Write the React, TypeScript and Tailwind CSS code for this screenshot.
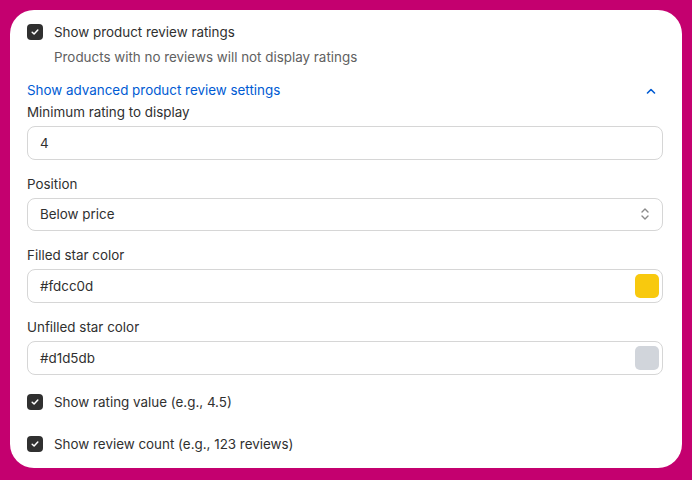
import React from "react";

function Check() {
  return (
    <span className="flex h-4 w-4 shrink-0 items-center justify-center rounded-[4px] bg-[#303030]">
      <svg width="10" height="10" viewBox="0 0 10 10" fill="none">
        <path d="M2.2 5.2 L4.1 7 L7.8 3.1" stroke="white" strokeWidth="1.5" strokeLinecap="round" strokeLinejoin="round" />
      </svg>
    </span>
  );
}

function Field({ label, children }: { label: string; children: React.ReactNode }) {
  return (
    <div className="flex flex-col">
      <div className="h-5 leading-5">{label}</div>
      <div className="mt-1 flex h-[33.67px] items-center rounded-[8px] border border-[#d6d6d6] bg-white pl-3 pr-[3px]">
        {children}
      </div>
    </div>
  );
}

export default function App() {
  return (
    <div className="h-[480px] w-[692px] bg-[#c4006f] pl-[10px] pt-[10px]" style={{ fontFamily: "Inter, 'Noto Sans', sans-serif" }}>
      <div className="flex h-[458px] w-[672px] flex-col rounded-[24px] bg-white pl-[17px] pr-[19px] pt-3 text-[13.4px] text-[#303030]">
        <div className="flex h-5 items-center gap-[11px]">
          <Check />
          <span>Show product review ratings</span>
        </div>
        <div className="mt-[5px] h-5 pl-[27px] leading-5 text-[#616161]">Products with no reviews will not display ratings</div>
        <div className="mt-[13.5px] flex h-5 items-center justify-between text-[#005bd3]">
          <span>Show advanced product review settings</span>
          <svg width="10" height="6" viewBox="0 0 10 6" fill="none" className="mr-[7px]">
            <path d="M1.5 5 L5 1.5 L8.5 5" stroke="#005bd3" strokeWidth="1.6" strokeLinecap="round" strokeLinejoin="round" />
          </svg>
        </div>
        <div className="mt-[1.5px] flex flex-col gap-[14px]">
          <Field label="Minimum rating to display">
            <span>4</span>
          </Field>
          <Field label="Position">
            <span className="flex-1">Below price</span>
            <svg width="10" height="16" viewBox="0 0 10 16" fill="none" className="mr-[9px]">
              <path d="M2 6 L5 3 L8 6" stroke="#8a8a8a" strokeWidth="1.4" strokeLinecap="round" strokeLinejoin="round" />
              <path d="M2 10 L5 13 L8 10" stroke="#8a8a8a" strokeWidth="1.4" strokeLinecap="round" strokeLinejoin="round" />
            </svg>
          </Field>
          <Field label="Filled star color">
            <span className="flex-1">#fdcc0d</span>
            <span className="h-6 w-6 rounded-[5px] bg-[#f8c90e]" />
          </Field>
          <Field label="Unfilled star color">
            <span className="flex-1">#d1d5db</span>
            <span className="h-6 w-6 rounded-[5px] bg-[#d1d5db]" />
          </Field>
        </div>
        <div className="mt-[17.5px] flex h-5 items-center gap-[11px]">
          <Check />
          <span>Show rating value (e.g., 4.5)</span>
        </div>
        <div className="mt-[21.5px] flex h-5 items-center gap-[11px]">
          <Check />
          <span>Show review count (e.g., 123 reviews)</span>
        </div>
      </div>
    </div>
  );
}
